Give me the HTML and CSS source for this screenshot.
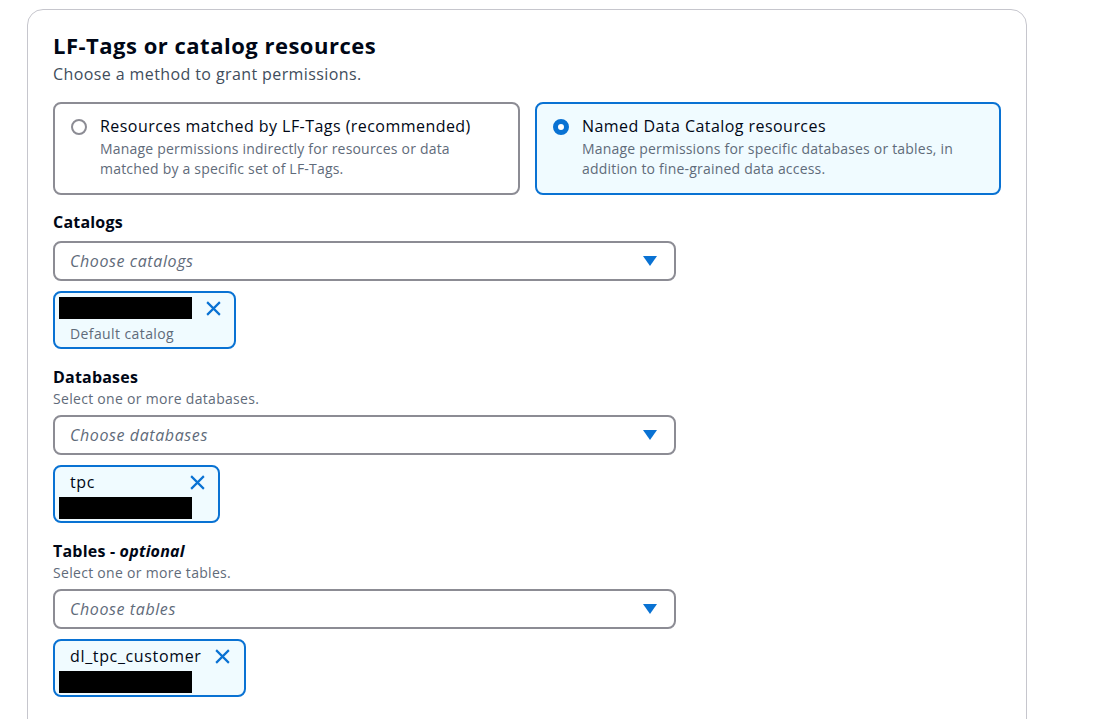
FILE: index.html
```html
<!DOCTYPE html>
<html lang="en">
<head>
<meta charset="utf-8">
<title>LF-Tags or catalog resources</title>
<link rel="stylesheet" href="styles.css">
</head>
<body>
<div class="panel">
  <h2 class="title">LF-Tags or catalog resources</h2>
  <p class="subtitle">Choose a method to grant permissions.</p>

  <div class="tiles">
    <div class="tile">
      <span class="radio"></span>
      <div class="tile-text">
        <div class="tile-label">Resources matched by LF-Tags (recommended)</div>
        <div class="tile-desc">Manage permissions indirectly for resources or data matched by a specific set of LF-Tags.</div>
      </div>
    </div>
    <div class="tile selected">
      <span class="radio checked"></span>
      <div class="tile-text">
        <div class="tile-label">Named Data Catalog resources</div>
        <div class="tile-desc">Manage permissions for specific databases or tables, in addition to fine-grained data access.</div>
      </div>
    </div>
  </div>

  <div class="field">
    <div class="label">Catalogs</div>
    <div class="select"><span class="placeholder">Choose catalogs</span><span class="caret"></span></div>
    <div class="token token-catalog">
      <div class="token-body">
        <div class="redact"></div>
        <div class="token-sub">Default catalog</div>
      </div>
      <span class="dismiss"><svg viewBox="0 0 16 16" width="17" height="17"><path d="M2 2 L14 14 M14 2 L2 14" stroke="#0972d3" stroke-width="2" fill="none"/></svg></span>
    </div>
  </div>

  <div class="field">
    <div class="label">Databases</div>
    <div class="desc">Select one or more databases.</div>
    <div class="select after-desc"><span class="placeholder">Choose databases</span><span class="caret"></span></div>
    <div class="token token-db">
      <div class="token-body">
        <div class="token-name">tpc</div>
        <div class="redact"></div>
      </div>
      <span class="dismiss"><svg viewBox="0 0 16 16" width="17" height="17"><path d="M2 2 L14 14 M14 2 L2 14" stroke="#0972d3" stroke-width="2" fill="none"/></svg></span>
    </div>
  </div>

  <div class="field">
    <div class="label">Tables - <i>optional</i></div>
    <div class="desc">Select one or more tables.</div>
    <div class="select after-desc"><span class="placeholder">Choose tables</span><span class="caret"></span></div>
    <div class="token token-table">
      <div class="token-body">
        <div class="token-name">dl_tpc_customer</div>
        <div class="redact"></div>
      </div>
      <span class="dismiss"><svg viewBox="0 0 16 16" width="17" height="17"><path d="M2 2 L14 14 M14 2 L2 14" stroke="#0972d3" stroke-width="2" fill="none"/></svg></span>
    </div>
  </div>

  <div class="field">
    <div class="label">View permissions</div>
  </div>
</div>
</body>
</html>
```

FILE: styles.css
```css
* { box-sizing: border-box; }

html, body {
  margin: 0;
  padding: 0;
  background: #ffffff;
}

body {
  font-family: "Open Sans", "Noto Sans", "Liberation Sans", sans-serif;
  color: #000716;
  font-size: 14px;
  line-height: 20px;
  height: 719px;
  overflow: hidden;
}

.panel {
  margin: 9px 0 0 27px;
  width: 1000px;
  border: 1px solid #c6c6cd;
  border-radius: 16px;
  padding: 21px 25px 40px 25px;
}

.title {
  margin: 0;
  font-size: 22px;
  line-height: 28px;
  font-weight: 700;
  letter-spacing: 0.5px;
}

.subtitle {
  margin: 4px 0 0;
  font-size: 16px;
  line-height: 22px;
  color: #414d5c;
  letter-spacing: 0.4px;
}

.tiles {
  display: flex;
  gap: 15px;
  margin-top: 17px;
}

.tile {
  flex: 0 0 467px;
  height: 93px;
  border: 2px solid #8c8c94;
  border-radius: 8px;
  padding: 11px 16px 14px 16px;
  display: flex;
  gap: 13px;
  align-items: flex-start;
}

.tile.selected {
  border-color: #0972d3;
  background: #f0fbff;
  flex-basis: 466px;
}

.radio {
  flex: 0 0 16px;
  width: 16px;
  height: 16px;
  margin-top: 4px;
  border-radius: 50%;
  border: 2px solid #8c8c94;
  background: #fff;
}

.radio.checked {
  border: 5px solid #0972d3;
}

.tile-label {
  font-size: 16px;
  line-height: 22px;
  letter-spacing: 0.45px;
}

.tile-desc {
  margin-top: 2px;
  color: #5f6b7a;
  font-size: 14px;
  line-height: 20px;
  letter-spacing: 0.2px;
}

.field {
  margin-top: 16px;
}

.field + .field {
  margin-top: 17px;
}

.label {
  font-weight: 700;
  font-size: 16px;
  line-height: 22px;
  letter-spacing: 0.2px;
}

.desc {
  margin-top: 1px;
  color: #5f6b7a;
  font-size: 14px;
  line-height: 20px;
  letter-spacing: 0.3px;
}

.select {
  margin-top: 8px;
  width: 623px;
  height: 40px;
  border: 2px solid #8c8c94;
  border-radius: 8px;
  display: flex;
  align-items: center;
  justify-content: space-between;
  padding: 0 17px 0 15px;
}

.select.after-desc {
  margin-top: 6px;
}

.placeholder {
  font-style: italic;
  color: #5f6b7a;
  font-size: 16px;
  letter-spacing: 0.6px;
}

.caret {
  width: 0;
  height: 0;
  border-left: 7px solid transparent;
  border-right: 7px solid transparent;
  border-top: 10px solid #0972d3;
}

.token {
  margin-top: 10px;
  display: inline-flex;
  align-items: flex-start;
  height: 58px;
  border: 2px solid #0972d3;
  border-radius: 8px;
  background: #f0fbff;
  padding: 4px 12px 2px 15px;
  gap: 12px;
}

.token-body {
  display: flex;
  flex-direction: column;
  gap: 4px;
}

.token-name {
  font-size: 16px;
  line-height: 22px;
  letter-spacing: 0.65px;
}

.token-sub {
  color: #5f6b7a;
  font-size: 14px;
  line-height: 22px;
  letter-spacing: 0.4px;
}

.redact {
  height: 22px;
  background: #000;
  width: 133px;
  margin-left: -11px;
}

.token-db .redact { margin-right: -16px; }

.dismiss {
  display: flex;
  align-items: center;
  justify-content: center;
  width: 18px;
  height: 22px;
}
```
